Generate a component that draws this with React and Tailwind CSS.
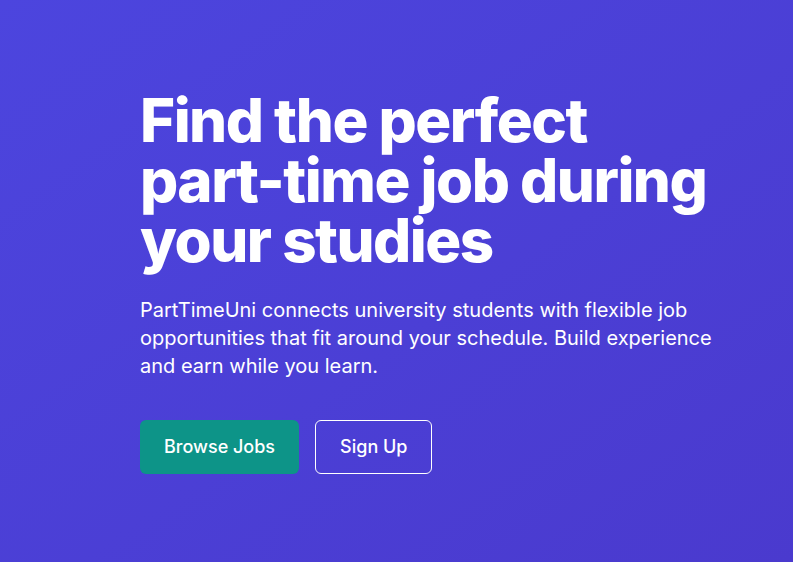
export default function App() {
  return (
    <div
      className="min-h-screen w-full bg-gradient-to-br from-[#4c45de] to-[#4a3ace] flex items-center pt-[2px]"
      style={{ fontFamily: "Inter, 'Noto Sans', sans-serif" }}
    >
      <div className="pl-[140px] w-full">
        <div className="w-[580px]">
          <h1 className="text-[60px] leading-[60px] font-extrabold tracking-tight text-white">
            Find the perfect part-time job during your studies
          </h1>
          <p className="mt-[26px] text-xl leading-7 text-white">
            PartTimeUni connects university students with flexible job opportunities that fit around your schedule. Build experience and earn while you learn.
          </p>
          <div className="mt-10 flex gap-4">
            <button className="bg-[#0d9488] text-white text-lg font-medium px-6 py-3 rounded-md">
              Browse Jobs
            </button>
            <button className="border border-white text-white text-lg font-medium px-6 py-3 rounded-md">
              Sign Up
            </button>
          </div>
        </div>
      </div>
    </div>
  );
}
